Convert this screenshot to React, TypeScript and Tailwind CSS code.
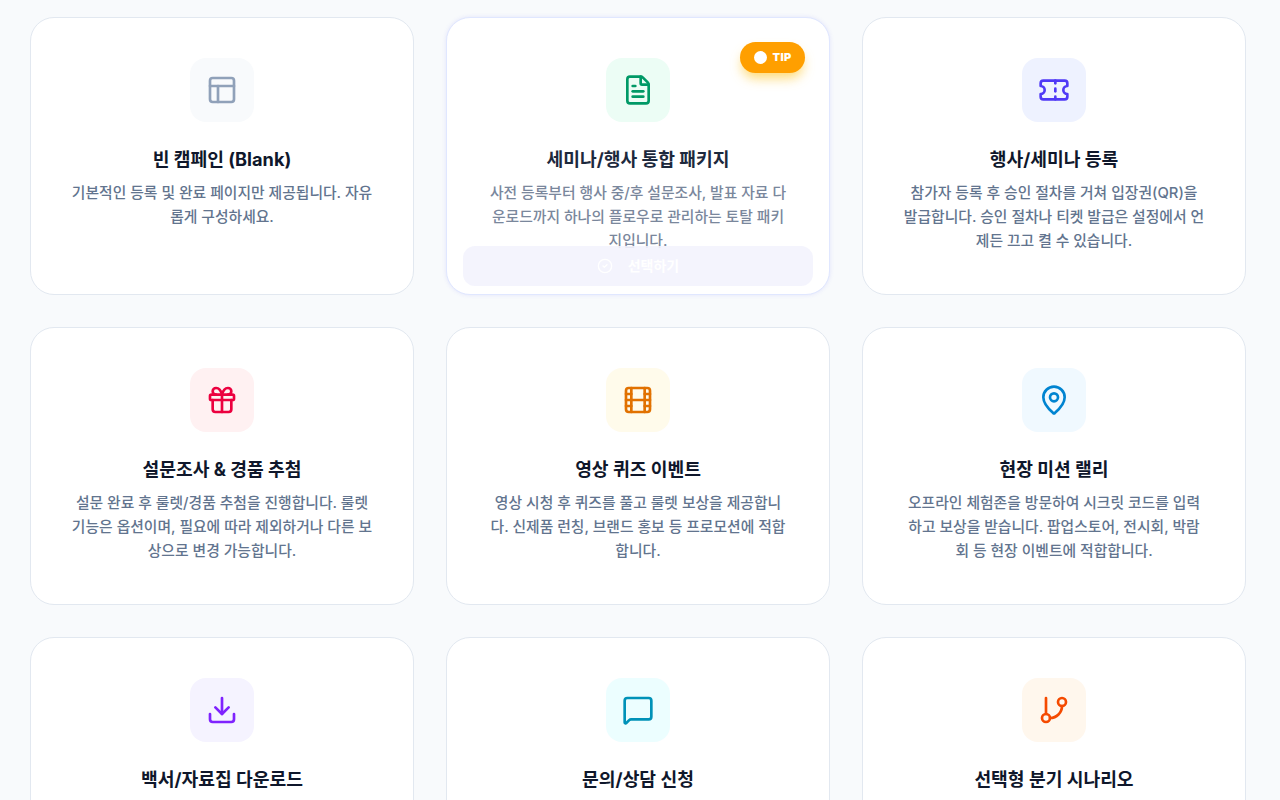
import { CircleCheck, Download, FileText, Film, Gift, GitBranch, MapPin, MessageSquare, PanelsTopLeft, Ticket } from "lucide-react";
import type { ComponentType } from "react";

type Template = {
  title: string;
  desc: string;
  icon: ComponentType<{ size?: number; className?: string }>;
  iconBox: string;
  iconColor: string;
  active?: boolean;
};

const templates: Template[] = [
  {
    title: "빈 캠페인 (Blank)",
    desc: "기본적인 등록 및 완료 페이지만 제공됩니다. 자유롭게 구성하세요.",
    icon: PanelsTopLeft,
    iconBox: "bg-slate-50",
    iconColor: "text-slate-400",
  },
  {
    title: "세미나/행사 통합 패키지",
    desc: "사전 등록부터 행사 중/후 설문조사, 발표 자료 다운로드까지 하나의 플로우로 관리하는 토탈 패키지입니다.",
    icon: FileText,
    iconBox: "bg-emerald-50",
    iconColor: "text-emerald-600",
    active: true,
  },
  {
    title: "행사/세미나 등록",
    desc: "참가자 등록 후 승인 절차를 거쳐 입장권(QR)을 발급합니다. 승인 절차나 티켓 발급은 설정에서 언제든 끄고 켤 수 있습니다.",
    icon: Ticket,
    iconBox: "bg-indigo-50",
    iconColor: "text-indigo-600",
  },
  {
    title: "설문조사 & 경품 추첨",
    desc: "설문 완료 후 룰렛/경품 추첨을 진행합니다. 룰렛 기능은 옵션이며, 필요에 따라 제외하거나 다른 보상으로 변경 가능합니다.",
    icon: Gift,
    iconBox: "bg-rose-50",
    iconColor: "text-rose-600",
  },
  {
    title: "영상 퀴즈 이벤트",
    desc: "영상 시청 후 퀴즈를 풀고 룰렛 보상을 제공합니다. 신제품 런칭, 브랜드 홍보 등 프로모션에 적합합니다.",
    icon: Film,
    iconBox: "bg-amber-50",
    iconColor: "text-amber-600",
  },
  {
    title: "현장 미션 랠리",
    desc: "오프라인 체험존을 방문하여 시크릿 코드를 입력하고 보상을 받습니다. 팝업스토어, 전시회, 박람회 등 현장 이벤트에 적합합니다.",
    icon: MapPin,
    iconBox: "bg-sky-50",
    iconColor: "text-sky-600",
  },
  {
    title: "백서/자료집 다운로드",
    desc: "",
    icon: Download,
    iconBox: "bg-violet-50",
    iconColor: "text-violet-600",
  },
  {
    title: "문의/상담 신청",
    desc: "",
    icon: MessageSquare,
    iconBox: "bg-cyan-50",
    iconColor: "text-cyan-600",
  },
  {
    title: "선택형 분기 시나리오",
    desc: "",
    icon: GitBranch,
    iconBox: "bg-orange-50",
    iconColor: "text-orange-600",
  },
];

function TemplateCard({ item }: { item: Template }) {
  const Icon = item.icon;
  return (
    <div
      className={`relative flex min-h-[278px] flex-col items-center rounded-3xl border bg-white p-10 text-center ${
        item.active ? "border-indigo-100 shadow-[0_0_4px_rgba(99,102,241,0.15)]" : "border-slate-200"
      }`}
    >
      {item.active ? (
        <div className="absolute top-[24px] right-[24px] flex h-[31px] w-[65px] items-center justify-center gap-[6px] rounded-full bg-[#ff9f00] shadow-[0_7px_12px_-2px_rgba(253,205,70,0.75)]">
          <span className="h-[13px] w-[13px] rounded-full bg-white" />
          <span className="text-[11px] font-black tracking-wide text-white">TIP</span>
        </div>
      ) : null}
      <div className={`mb-[23px] flex h-16 w-16 items-center justify-center rounded-2xl ${item.iconBox}`}>
        <Icon size={32} className={item.iconColor} />
      </div>
      <h3 className={`text-[18.2px] leading-7 font-bold ${item.active ? "text-slate-800" : "text-slate-900"}`}>
        {item.title}
      </h3>
      <p className={`mt-[8px] text-[14.8px] leading-6 font-medium ${item.active ? "text-[#7a879c]" : "text-slate-500"}`}>
        {item.desc}
      </p>
      {item.active ? (
        <div className="absolute right-4 bottom-2 left-4 flex h-10 items-center justify-center gap-[15px] rounded-xl bg-[#f3f3fd]/90">
          <CircleCheck size={16} className="text-white" />
          <span className="text-sm font-bold text-white">선택하기</span>
        </div>
      ) : null}
    </div>
  );
}

export default function App() {
  return (
    <div className="h-screen overflow-hidden bg-slate-50 pt-[17px] pr-[34px] pl-[30px] font-['Inter','Noto_Sans_CJK_KR',sans-serif]">
      <div className="grid grid-cols-3 gap-8">
        {templates.map((item) => (
          <TemplateCard key={item.title} item={item} />
        ))}
      </div>
    </div>
  );
}
